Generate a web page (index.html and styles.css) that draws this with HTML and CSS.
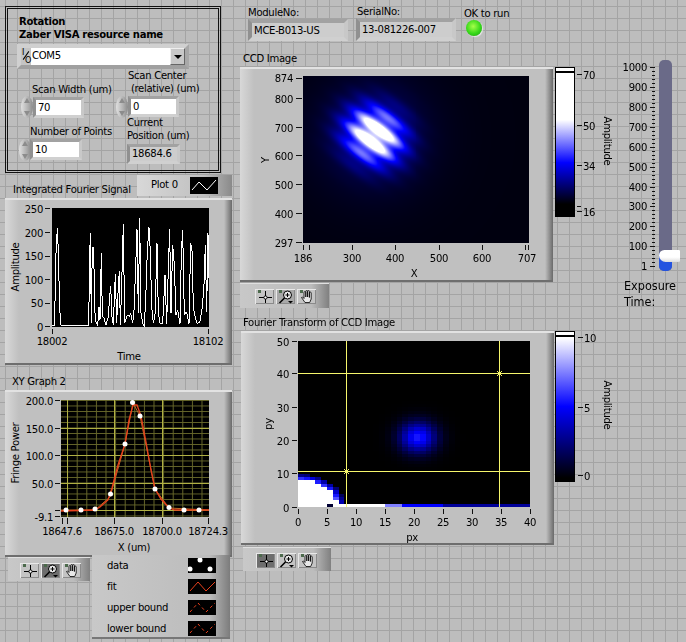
FILE: index.html
```html
<!DOCTYPE html>
<html lang="en">
<head>
    <meta charset="UTF-8">
    <meta name="viewport" content="width=device-width, initial-scale=1.0">
    <title>Front Panel</title>
    <link rel="stylesheet" href="styles.css">
</head>
<body>
<div class="front-panel">

    <!-- Zaber settings cluster -->
    <div class="cluster"></div>
    <div class="txt bold rotation">Rotation<br>Zaber VISA resource name</div>
    <div class="combo">
        <span class="io"><i>I</i><b></b><i>O</i></span>
        <span class="combo-value">COM5</span>
        <span class="combo-btn"></span>
    </div>

    <div class="txt lbl-width">Scan Width (um)</div>
    <div class="spinner spin-width"></div>
    <div class="bezel field white num-width">70</div>

    <div class="txt lbl-center">Scan Center<br>&nbsp;(relative) (um)</div>
    <div class="spinner spin-center"></div>
    <div class="bezel field white num-center">0</div>

    <div class="txt lbl-points">Number of Points</div>
    <div class="spinner spin-points"></div>
    <div class="bezel field white num-points">10</div>

    <div class="txt lbl-current">Current<br>Position (um)</div>
    <div class="bezel field grey num-current">18684.6</div>

    <!-- top indicators -->
    <div class="txt lbl-module">ModuleNo:</div>
    <div class="bezel field grey str-module">MCE-B013-US</div>
    <div class="txt lbl-serial">SerialNo:</div>
    <div class="bezel field grey str-serial">13-081226-007</div>
    <div class="txt lbl-ok">OK to run</div>
    <div class="led"></div>

    <!-- integrated fourier signal -->
    <div class="txt lbl-signal">Integrated Fourier Signal</div>
    <div class="plot-legend">
        <span class="txt legend-name">Plot 0</span>
        <svg class="swatch-plot" viewBox="0 0 28 17"><polyline points="2,13 9,5 17,13 26,3" class="line-white"/></svg>
    </div>
    <div class="panel panel-signal">
        <svg class="art" viewBox="5 198 227 167">
            <rect class="plot-bg" x="52" y="208" width="157" height="119"/>
            <polyline class="line-signal" transform="translate(40 200) scale(.3333)" points="36,378 44,378 45,306 48,160 52,85 55,155 58,285 61,365 64,378 145,378 147,310 149,170 151,100 154,370 156,205 159,140 162,205 165,340 168,365 173,378 177,320 180,360 184,158 187,350 192,355 198,375 205,350 209,290 212,258 216,350 220,375 226,222 230,370 233,295 238,213 241,375 245,255 250,72 254,370 262,345 268,350 272,340 278,370 282,330 286,230 291,88 295,340 299,55 303,340 308,370 313,380 318,270 322,150 327,82 331,155 335,320 340,370 345,345 351,130 355,340 360,370 368,372 375,225 380,372 385,205 389,88 393,340 398,135 403,195 408,345 413,330 420,372 424,160 428,90 433,345 438,335 442,345 447,372 452,128 456,150 460,320 466,355 472,372 480,365 487,320 492,255 496,135 500,335 504,100 507,235"/>
            <g class="axis">
                <path d="M45 208.5h5M45 232.5h5M45 256.5h5M45 279.5h5M45 303.5h5M45 326.5h5M52.5 329v5M208.5 329v5"/>
            </g>
            <g class="tick-y">
                <text x="43" y="213">250</text><text x="43" y="237">200</text><text x="43" y="260">150</text>
                <text x="43" y="284">100</text><text x="43" y="307">50</text><text x="43" y="331">0</text>
            </g>
            <g class="tick-x">
                <text x="52" y="345">18002</text><text x="208" y="345">18102</text>
                <text x="129" y="360">Time</text>
            </g>
            <text class="tick-x" transform="translate(19 267) rotate(-90)">Amplitude</text>
        </svg>
    </div>

    <!-- xy graph -->
    <div class="txt lbl-xy">XY Graph 2</div>
    <div class="panel panel-xy">
        <svg class="art" viewBox="5 390 227 167">
            <defs>
                <pattern id="minor-grid" x="57.5" y="400" width="9.6" height="5.5" patternUnits="userSpaceOnUse">
                    <path class="grid-minor" d="M.5 0v5.5M0 .5h9.6"/>
                </pattern>
            </defs>
            <rect class="plot-bg" x="61" y="400" width="148" height="117"/>
            <rect x="61" y="400" width="148" height="117" fill="url(#minor-grid)"/>
            <path class="grid-major" d="M67.5 400v117M114.5 400v117M162.5 400v117M61 428.5h148M61 455.5h148M61 483.5h148M61 510.5h148"/>
            <polyline class="line-bound" points="61,510 95,510 110,497 125,444 133,403 140,416 155,489 169,508 209,510"/>
            <polyline class="line-fit" points="61,511 95,510 100,507 108,500 112,488 118,465 125,444 129,420 133,405 137,405 141,416 146,442 151,470 155,489 161,499 169,508 175,510 209,510"/>
            <g class="points">
                <circle cx="66" cy="510" r="2.5"/><circle cx="81" cy="510" r="2.5"/><circle cx="95" cy="509" r="2.5"/>
                <circle cx="110.5" cy="494" r="2.5"/><circle cx="125" cy="444" r="2.5"/><circle cx="132.5" cy="402.5" r="2.5"/>
                <circle cx="140" cy="416" r="2.5"/><circle cx="155" cy="489" r="2.5"/><circle cx="169" cy="507.5" r="2.5"/>
                <circle cx="184" cy="510" r="2.5"/><circle cx="199" cy="510" r="2.5"/>
            </g>
            <g class="axis">
                <path d="M55 400.5h5M55 428.5h5M55 455.5h5M55 483.5h5M55 510.5h5M55 516.5h5M62.5 518v6M67.5 518v6M114.5 518v6M162.5 518v6M208.5 518v6"/>
            </g>
            <g class="tick-y">
                <text x="53" y="405">200.0</text><text x="53" y="433">150.0</text><text x="53" y="460">100.0</text>
                <text x="53" y="488">50.0</text><text x="53" y="521">-9.1</text>
            </g>
            <g class="tick-x">
                <text x="62" y="535">18647.6</text><text x="114" y="535">18675.0</text><text x="162" y="535">18700.0</text><text x="208" y="535">18724.3</text>
                <text x="134" y="551">X (um)</text>
            </g>
            <text class="tick-x" transform="translate(19 453) rotate(-90)">Fringe Power</text>
        </svg>
    </div>
    <div class="toolbar tools-xy">
        <span class="tool"><svg viewBox="0 0 19 15"><use href="#icon-cursor"/></svg></span>
        <span class="tool pressed"><svg viewBox="0 0 19 15"><use href="#icon-zoom"/></svg></span>
        <span class="tool"><svg viewBox="0 0 19 15"><use href="#icon-hand"/></svg></span>
    </div>
    <div class="legend-box">
        <div class="legend-row"><span class="txt">data</span>
            <svg class="swatch" viewBox="0 0 28 15"><circle cx="12" cy="2" r="2.5" fill="#fff"/><circle cx="22" cy="11" r="2.5" fill="#fff"/><circle cx="2" cy="11" r="2.5" fill="#fff"/></svg></div>
        <div class="legend-row"><span class="txt">fit</span>
            <svg class="swatch" viewBox="0 0 28 15"><polyline points="2,12 10,3 18,12 27,3" class="line-fit thin"/></svg></div>
        <div class="legend-row"><span class="txt">upper bound</span>
            <svg class="swatch" viewBox="0 0 28 15"><polyline points="2,12 10,3 18,12 27,3" class="line-dash"/></svg></div>
        <div class="legend-row"><span class="txt">lower bound</span>
            <svg class="swatch" viewBox="0 0 28 15"><polyline points="2,12 10,3 18,12 27,3" class="line-dash"/></svg></div>
    </div>

    <!-- ccd image -->
    <div class="txt lbl-ccd">CCD Image</div>
    <div class="panel panel-ccd">
        <canvas id="ccd" class="map map-ccd" width="227" height="167"></canvas>
        <svg class="art" viewBox="240 67 313 215">
            <g class="axis">
                <path d="M296 78.5h6M296 98.5h6M296 127.5h6M296 155.5h6M296 184.5h6M296 213.5h6M296 242.5h6M303.5 245v5M309.5 245v5M352.5 245v5M395.5 245v5M439.5 245v5M482.5 245v5M525.5 245v5M528.5 245v5"/>
            </g>
            <g class="tick-y">
                <text x="293" y="82">874</text><text x="293" y="103">800</text><text x="293" y="132">700</text><text x="293" y="160">600</text>
                <text x="293" y="189">500</text><text x="293" y="218">400</text><text x="293" y="247">297</text>
            </g>
            <g class="tick-x">
                <text x="303" y="262">186</text><text x="352" y="262">300</text><text x="395" y="262">400</text><text x="439" y="262">500</text><text x="482" y="262">600</text><text x="527" y="262">707</text>
                <text x="414" y="277">X</text>
            </g>
            <text class="tick-x" transform="translate(269 160) rotate(-90)">Y</text>
        </svg>
    </div>
    <div class="toolbar tools-ccd">
        <span class="tool"><svg viewBox="0 0 19 15"><use href="#icon-cursor"/></svg></span>
        <span class="tool active"><svg viewBox="0 0 19 15"><use href="#icon-zoom"/></svg></span>
        <span class="tool"><svg viewBox="0 0 19 15"><use href="#icon-hand"/></svg></span>
    </div>

    <div class="colorbar bar-ccd"><span class="cap"></span></div>
    <svg class="art scale-ccd" viewBox="575 60 50 165">
        <g class="axis"><path d="M577 74.5h5M577 125.5h5M577 165.5h5M577 206.5h4M577 211.5h5"/></g>
        <g class="tick-l">
            <text x="583" y="79">70</text><text x="583" y="130">50</text><text x="583" y="170">34</text><text x="583" y="216">16</text>
        </g>
        <text class="tick-x" transform="translate(604 141) rotate(90)">Amplitude</text>
    </svg>

    <!-- exposure slider -->
    <svg class="art scale-exposure" viewBox="620 55 66 225">
        <g class="axis">
            <path d="M650 67.5h5M650 87.5h5M650 107.5h5M650 127.5h5M650 147.5h5M650 167.5h5M650 187.5h5M650 206.5h5M650 226.5h5M650 246.5h5M650 266.5h5"/>
            <path class="minor-ticks" d="M652 71.5h3M652 75.5h3M652 79.5h3M652 83.5h3M652 91.5h3M652 95.5h3M652 99.5h3M652 103.5h3M652 111.5h3M652 115.5h3M652 119.5h3M652 123.5h3M652 131.5h3M652 135.5h3M652 139.5h3M652 143.5h3M652 151.5h3M652 155.5h3M652 159.5h3M652 163.5h3M652 171.5h3M652 175.5h3M652 179.5h3M652 183.5h3M652 191.5h3M652 195.5h3M652 199.5h3M652 203.5h3M652 210.5h3M652 214.5h3M652 218.5h3M652 222.5h3M652 230.5h3M652 234.5h3M652 238.5h3M652 242.5h3M652 250.5h3M652 254.5h3M652 258.5h3M652 262.5h3"/>
        </g>
        <g class="tick-y">
            <text x="647" y="71">1000</text><text x="647" y="91">900</text><text x="647" y="111">800</text><text x="647" y="131">700</text><text x="647" y="151">600</text><text x="647" y="171">500</text><text x="647" y="191">400</text><text x="647" y="210">300</text><text x="647" y="230">200</text><text x="647" y="250">100</text><text x="647" y="270">1</text>
        </g>
    </svg>
    <div class="slider-track"><span class="slider-fill"></span></div>
    <div class="slider-thumb"></div>
    <div class="txt lbl-exposure">Exposure<br>Time:</div>

    <!-- fourier transform -->
    <div class="txt lbl-fourier">Fourier Transform of CCD Image</div>
    <div class="panel panel-fourier">
        <canvas id="fourier" class="map map-fourier" width="40" height="50"></canvas>
        <svg class="art" viewBox="241 331 313 214">
            <g class="cursors">
                <path d="M346.500 341v166M499.500 341v166M298 373.500h232M298 471.500h232"/>
                <path d="M344 469l5 5M349 469l-5 5M497 371l5 5M502 371l-5 5"/>
            </g>
            <g class="axis">
                <path d="M292 341.500h5M292 373.500h5M292 407.500h5M292 440.500h5M292 473.500h5M292 507.500h5M298.500 509v5M327.500 509v5M356.500 509v5M385.500 509v5M414.500 509v5M443.500 509v5M472.500 509v5M501.500 509v5M530.500 509v5"/>
            </g>
            <g class="tick-y">
                <text x="289" y="346">50</text><text x="289" y="378">40</text><text x="289" y="412">30</text>
                <text x="289" y="445">20</text><text x="289" y="478">10</text><text x="289" y="512">0</text>
            </g>
            <g class="tick-x">
                <text x="298" y="526">0</text><text x="327" y="526">5</text><text x="356" y="526">10</text><text x="385" y="526">15</text><text x="414" y="526">20</text><text x="443" y="526">25</text><text x="472" y="526">30</text><text x="501" y="526">35</text><text x="530" y="526">40</text>
                <text x="412" y="541">px</text>
            </g>
            <text class="tick-x" transform="translate(272 424) rotate(-90)">py</text>
        </svg>
    </div>
    <div class="toolbar tools-fourier">
        <span class="tool pressed"><svg viewBox="0 0 19 15"><use href="#icon-cursor"/></svg></span>
        <span class="tool"><svg viewBox="0 0 19 15"><use href="#icon-zoom"/></svg></span>
        <span class="tool"><svg viewBox="0 0 19 15"><use href="#icon-hand"/></svg></span>
    </div>

    <div class="colorbar bar-fourier"><span class="cap"></span></div>
    <svg class="art scale-fourier" viewBox="575 325 50 165">
        <g class="axis"><path d="M578 337.500h5M578 407.500h5M578 475.500h5"/></g>
        <g class="tick-l">
            <text x="584" y="342">10</text><text x="584" y="412">5</text><text x="584" y="480">0</text>
        </g>
        <text class="tick-x" transform="translate(604 405) rotate(90)">Amplitude</text>
    </svg>

    <!-- shared toolbar icons -->
    <svg class="icon-defs">
        <defs>
            <g id="icon-cursor">
                <rect x="3" y="1" width="3" height="3" class="tool-dot"/>
                <path d="M10.500 2v12M4 8.500h13" class="tool-line"/>
                <circle cx="10.500" cy="8.500" r="1.600" fill="#fff" stroke="#000"/>
            </g>
            <g id="icon-zoom">
                <rect x="3" y="1" width="3" height="3" class="tool-dot"/>
                <circle cx="11.500" cy="6" r="4" fill="#e8e8e8" stroke="#000"/>
                <path d="M9.500 6h4M11.500 4v4" class="tool-line"/>
                <path d="M8.500 9l-5 5" stroke="#000" stroke-width="1.600"/>
                <path d="M12 12h5l-2.500 2.500z" fill="#000"/>
            </g>
            <g id="icon-hand">
                <rect x="3" y="1" width="3" height="3" class="tool-dot"/>
                <path d="M4.500 8.500l1-.5 1.500 1.500V3.500a.9.9 0 0 1 1.800 0V8 2.500a.9.9 0 0 1 1.800 0V8 2.500a.9.9 0 0 1 1.800 0V8.500 4a.9.9 0 0 1 1.800 0V10l-1.500 3.500H8z" class="hand"/>
            </g>
        </defs>
    </svg>
</div>
<script src="charts.js"></script>
</body>
</html>
```

FILE: styles.css
```css
html, body {
    margin: 0;
    padding: 0;
}
body {
    font-family: 'DejaVu Sans', sans-serif;
    font-stretch: condensed;
    font-size: 11.2px;
    letter-spacing: -.3px;
    color: #000;
}
.front-panel {
    position: relative;
    width: 686px;
    height: 642px;
    overflow: hidden;
    background-color: #bdbdbd;
    background-image:
        linear-gradient(90deg, #a4a4a4 1px, transparent 1px),
        linear-gradient(#a4a4a4 1px, transparent 1px);
    background-size: 12px 12px;
    background-position: 5px 6px;
}
.front-panel > * {
    position: absolute;
}
.txt {
    white-space: nowrap;
    line-height: 13px;
}
.bold {
    font-weight: bold;
}
.art {
    display: block;
    position: absolute;
    left: 0;
    top: 0;
    width: 100%;
    height: 100%;
}
.art text {
    font-family: 'DejaVu Sans', sans-serif;
    font-stretch: condensed;
    font-size: 11.2px;
    letter-spacing: -.3px;
    fill: #000;
}
.tick-y text {
    text-anchor: end;
}
.tick-x, .tick-x text {
    text-anchor: middle;
}
.tick-l text {
    text-anchor: start;
}
.axis path {
    fill: none;
    stroke: #111;
    stroke-width: 1;
}
.plot-bg {
    fill: #000;
}

/* cluster */
.cluster {
    left: 5px;
    top: 6px;
    width: 214px;
    height: 165px;
    border: 1px solid #111;
    outline: 1px solid #111;
    outline-offset: -3px;
}
.rotation { left: 19px; top: 15px; }
.combo {
    left: 17px;
    top: 44px;
    width: 172px;
    height: 25px;
    box-sizing: border-box;
    border: 4px solid;
    border-color: #d0d0d0 #a8a8a8 #a0a0a0 #d0d0d0;
    background: #c4c4c4;
    display: flex;
}
.io {
    width: 10px;
    font-size: 9px;
    line-height: 8px;
    position: relative;
}
.io i {
    position: absolute;
    font-style: normal;
    left: 1px;
    top: 0;
}
.io b + i {
    left: 4px;
    top: 8px;
}
.io b {
    position: absolute;
    left: 0;
    top: 7px;
    width: 10px;
    height: 1px;
    background: #000;
    transform: rotate(-55deg);
}
.combo-value {
    flex: 1;
    background: #fff;
    padding-left: 1px;
    line-height: 16px;
}
.combo-btn {
    width: 15px;
    background: #c8c8c8;
    border: 1px solid;
    border-color: #eee #666 #666 #eee;
    box-sizing: border-box;
    position: relative;
}
.combo-btn::after {
    content: "";
    position: absolute;
    left: 3px;
    top: 6px;
    border: 4px solid transparent;
    border-top: 4px solid #000;
    border-bottom: none;
}

/* numeric controls */
.field {
    box-sizing: border-box;
    padding-left: 2px;
    line-height: 15px;
    white-space: nowrap;
}
.bezel {
    border: 3px solid;
    border-color: #a2a2a2 #c8c8c8 #d0d0d0 #909090;
    background-clip: padding-box;
}
.white { background-color: #fff; }
.grey { background-color: #cdcdcd; }
.spinner {
    width: 12px;
    height: 22px;
    border-radius: 6px / 11px;
    background: linear-gradient(90deg, #e0e0e0, #b0b0b0 60%, #8a8a8a);
}
.spinner::before, .spinner::after {
    content: "";
    position: absolute;
    left: 3px;
    border: 3px solid transparent;
}
.spinner::before {
    top: 2px;
    border-bottom: 5px solid #8c8c8c;
    border-top: none;
}
.spinner::after {
    bottom: 2px;
    border-top: 5px solid #8c8c8c;
    border-bottom: none;
}
.lbl-width { left: 32px; top: 83px; }
.spin-width { left: 21px; top: 96px; }
.num-width { left: 33px; top: 97px; width: 51px; height: 21px; }
.lbl-center { left: 128px; top: 69px; }
.spin-center { left: 116px; top: 96px; }
.num-center { left: 128px; top: 96px; width: 51px; height: 21px; }
.lbl-points { left: 30px; top: 125px; }
.spin-points { left: 19px; top: 139px; }
.num-points { left: 30px; top: 139px; width: 52px; height: 21px; }
.lbl-current { left: 127px; top: 116px; }
.num-current { left: 127px; top: 144px; width: 53px; height: 20px; line-height: 14px; }

/* top row */
.lbl-module { left: 248px; top: 6px; }
.str-module { left: 248px; top: 19px; width: 100px; height: 22px; padding-left: 2px; border-width: 4px; }
.lbl-serial { left: 357px; top: 5px; }
.str-serial { left: 356px; top: 18px; width: 100px; height: 23px; border-width: 4px; }
.lbl-ok { left: 464px; top: 7px; }
.led {
    left: 466px;
    top: 20px;
    width: 16px;
    height: 16px;
    border-radius: 50%;
    background: radial-gradient(circle at 45% 40%, #a6ff4a, #37d81a 55%, #1c9a10);
    box-shadow: 1px 1px 1px #e8e8e8;
}

/* graph panels */
.panel {
    box-sizing: border-box;
    border-top: 2px solid #e2e2e2;
    border-bottom: 2px solid #6e6e6e;
    background: linear-gradient(90deg, #d8d8d8 0, #c0c0c0 14px, #c0c0c0 calc(100% - 8px), #6a6a6a 100%);
}
.panel-signal { left: 5px; top: 198px; width: 227px; height: 167px; }
.panel-xy { left: 5px; top: 390px; width: 227px; height: 167px; }
.panel-ccd { left: 240px; top: 67px; width: 313px; height: 215px; }
.panel-fourier { left: 241px; top: 331px; width: 313px; height: 214px; }
.panel .art {
    top: -2px;
    height: calc(100% + 4px);
}
.map {
    position: absolute;
    image-rendering: pixelated;
    display: block;
}
.map-ccd { left: 63px; top: 7px; width: 226px; height: 167px; }
.map-fourier { left: 57px; top: 8px; width: 232px; height: 166px; }
.lbl-signal { left: 13px; top: 183px; }
.lbl-xy { left: 12px; top: 375px; }
.lbl-ccd { left: 243px; top: 52px; }
.lbl-fourier { left: 243px; top: 316px; }
.plot-legend {
    left: 137px;
    top: 175px;
    width: 95px;
    height: 21px;
    background: linear-gradient(90deg, #d8d8d8, #c0c0c0 70%, #8a8a8a);
}
.legend-name {
    position: absolute;
    left: 14px;
    top: 3px;
}
.swatch-plot {
    position: absolute;
    left: 53px;
    top: 2px;
    width: 28px;
    height: 17px;
    background: #000;
}
.line-white {
    fill: none;
    stroke: #fff;
}
.line-signal {
    fill: none;
    stroke: #fff;
    stroke-width: 3;
    shape-rendering: crispEdges;
}
.grid-minor {
    fill: none;
    stroke: #66662a;
    stroke-width: 1;
}
.grid-major {
    fill: none;
    stroke: #b0b044;
    stroke-width: 1;
}
.line-fit {
    fill: none;
    stroke: #e8401c;
    stroke-width: 1.3;
}
.line-fit.thin {
    stroke-width: 1;
}
.line-bound {
    fill: none;
    stroke: #c06a28;
}
.line-dash {
    fill: none;
    stroke: #e8401c;
    stroke-dasharray: 3 3;
}
.points circle {
    fill: #fff;
}
.cursors path {
    fill: none;
    stroke: #f6f66c;
    stroke-width: 1;
}

/* toolbars */
.toolbar {
    box-sizing: border-box;
    display: flex;
    gap: 2px;
    padding: 5px 0 0 12px;
    border-top: 1px solid #e0e0e0;
    background: linear-gradient(90deg, #c8c8c8, #bcbcbc 80%, #808080);
}
.tools-xy { left: 8px; top: 557px; width: 82px; height: 24px; }
.tools-ccd { left: 240px; top: 283px; width: 89px; height: 25px; padding-left: 15px; }
.tools-fourier { left: 243px; top: 547px; width: 88px; height: 24px; padding-left: 13px; }
.tool {
    width: 19px;
    height: 15px;
    box-sizing: border-box;
    background: #c4c4c4;
    box-shadow: inset 1px 1px 0 #e8e8e8, inset -1px -1px 0 #8a8a8a;
}
.tool svg {
    display: block;
    width: 19px;
    height: 15px;
}
.tool.pressed {
    background: #6e6e6e;
}
.tool.active {
    background: #a8a8a8;
}
.tool-dot { fill: #4c6a4c; }
.pressed .tool-dot, .active .tool-dot { fill: #3cf03c; }
.tool-line {
    fill: none;
    stroke: #000;
}
.hand {
    fill: #e8e8e8;
    stroke: #000;
    stroke-width: .8;
}
.icon-defs {
    width: 0;
    height: 0;
}

/* legend of xy graph */
.legend-box {
    left: 92px;
    top: 555px;
    width: 138px;
    height: 84px;
    box-sizing: border-box;
    padding: 3px 14px 0 15px;
    display: flex;
    flex-direction: column;
    gap: 6px;
    background: linear-gradient(90deg, #c8c8c8, #bcbcbc 85%, #7c7c7c);
    border-bottom: 2px solid #777;
}
.legend-row {
    display: flex;
    justify-content: space-between;
    align-items: center;
    height: 15px;
}
.swatch {
    width: 28px;
    height: 15px;
    background: #000;
}

/* color ramps */
.colorbar {
    left: 555px;
    width: 20px;
    box-sizing: border-box;
    border: 1px solid #000;
}
.cap {
    display: block;
    height: 3px;
    background: #fff;
    border-bottom: 2px solid #000;
}
.bar-ccd {
    top: 67px;
    height: 150px;
    background: linear-gradient(#fff 35%, #0000ff 64%, #000 92%);
}
.bar-fourier {
    top: 331px;
    height: 151px;
    background: linear-gradient(#fff 4%, #0000ff 50%, #000 98%);
}
.scale-ccd { left: 575px; top: 60px; width: 50px; height: 165px; }
.scale-fourier { left: 575px; top: 325px; width: 50px; height: 165px; }
.scale-exposure { left: 620px; top: 55px; width: 66px; height: 225px; }
.slider-track {
    left: 659px;
    top: 60px;
    width: 13px;
    height: 211px;
    border-radius: 5px;
    background: #6a6a88;
    overflow: hidden;
}
.slider-fill {
    display: block;
    margin-top: 193px;
    height: 18px;
    background: #2453e0;
}
.slider-thumb {
    left: 659px;
    top: 250px;
    width: 21px;
    height: 12px;
    border-radius: 8px 2px 2px 10px;
    background: linear-gradient(#fff 60%, #dcdcdc);
}
.lbl-exposure {
    left: 624px;
    top: 278px;
    font-size: 12.5px;
    letter-spacing: 0;
    line-height: 16px;
}
```

FILE: charts.js
```js
// intensity maps for the two image graphs

function rampColor(v) {
    // black -> blue -> white
    v = Math.max(0, Math.min(1, v));
    if (v < 0.5) {
        return [0, 0, Math.round(v * 2 * 255)];
    }
    const c = Math.round((v - 0.5) * 2 * 255);
    return [c, c, 255];
}

function fillMap(id, valueAt) {
    const canvas = document.getElementById(id);
    const ctx = canvas.getContext('2d');
    const img = ctx.createImageData(canvas.width, canvas.height);
    for (let y = 0; y < canvas.height; y++) {
        for (let x = 0; x < canvas.width; x++) {
            const rgb = rampColor(valueAt(x, y));
            const i = (y * canvas.width + x) * 4;
            img.data[i] = rgb[0];
            img.data[i + 1] = rgb[1];
            img.data[i + 2] = rgb[2];
            img.data[i + 3] = 255;
        }
    }
    ctx.putImageData(img, 0, 0);
}

// CCD: tilted fringes under a gaussian envelope, plus a wide dim halo
fillMap('ccd', function(x, y) {
    const dx = x - 71;
    const dy = y - 59;
    const u = dx * 0.8 + dy * 0.6;
    const v = -dx * 0.6 + dy * 0.8;
    const env = Math.exp(-(u * u) / (2 * 21 * 21) - (v * v) / (2 * 18 * 18));
    const fringe = 0.78 - 0.22 * Math.cos(v * 2 * Math.PI / 16);
    const halo = 0.12 * Math.exp(-(dx * dx + dy * dy) / (2 * 42 * 42));
    return 0.03 + halo + 1.35 * env * fringe;
});

// Fourier transform: 40 x 50 cells, row 0 at the bottom
fillMap('fourier', function(col, row) {
    const px = col + 0.5;
    const py = 49.5 - row;
    const blob = 0.55 * Math.exp(-((px - 20.7) ** 2) / (2 * 2.2 * 2.2) - ((py - 21) ** 2) / (2 * 3.2 * 3.2));
    const d = Math.sqrt((px / 6.8) ** 2 + (py / 8.3) ** 2);
    let corner = 0;
    if (d < 0.98) corner = 1;
    else if (d < 1.2) corner = 0.6 * (1.2 - d) / 0.22 + 0.12;
    let edge = 0;
    if (py < 1) {
        if (px < 15) edge = 1;
        else if (px < 18) edge = 0.75;
        else if (px < 25) edge = 0.5;
        else edge = 0.3;
        if (px > 5 && px < 6) return 0.1;
    }
    return Math.max(blob, corner, edge);
});
```
